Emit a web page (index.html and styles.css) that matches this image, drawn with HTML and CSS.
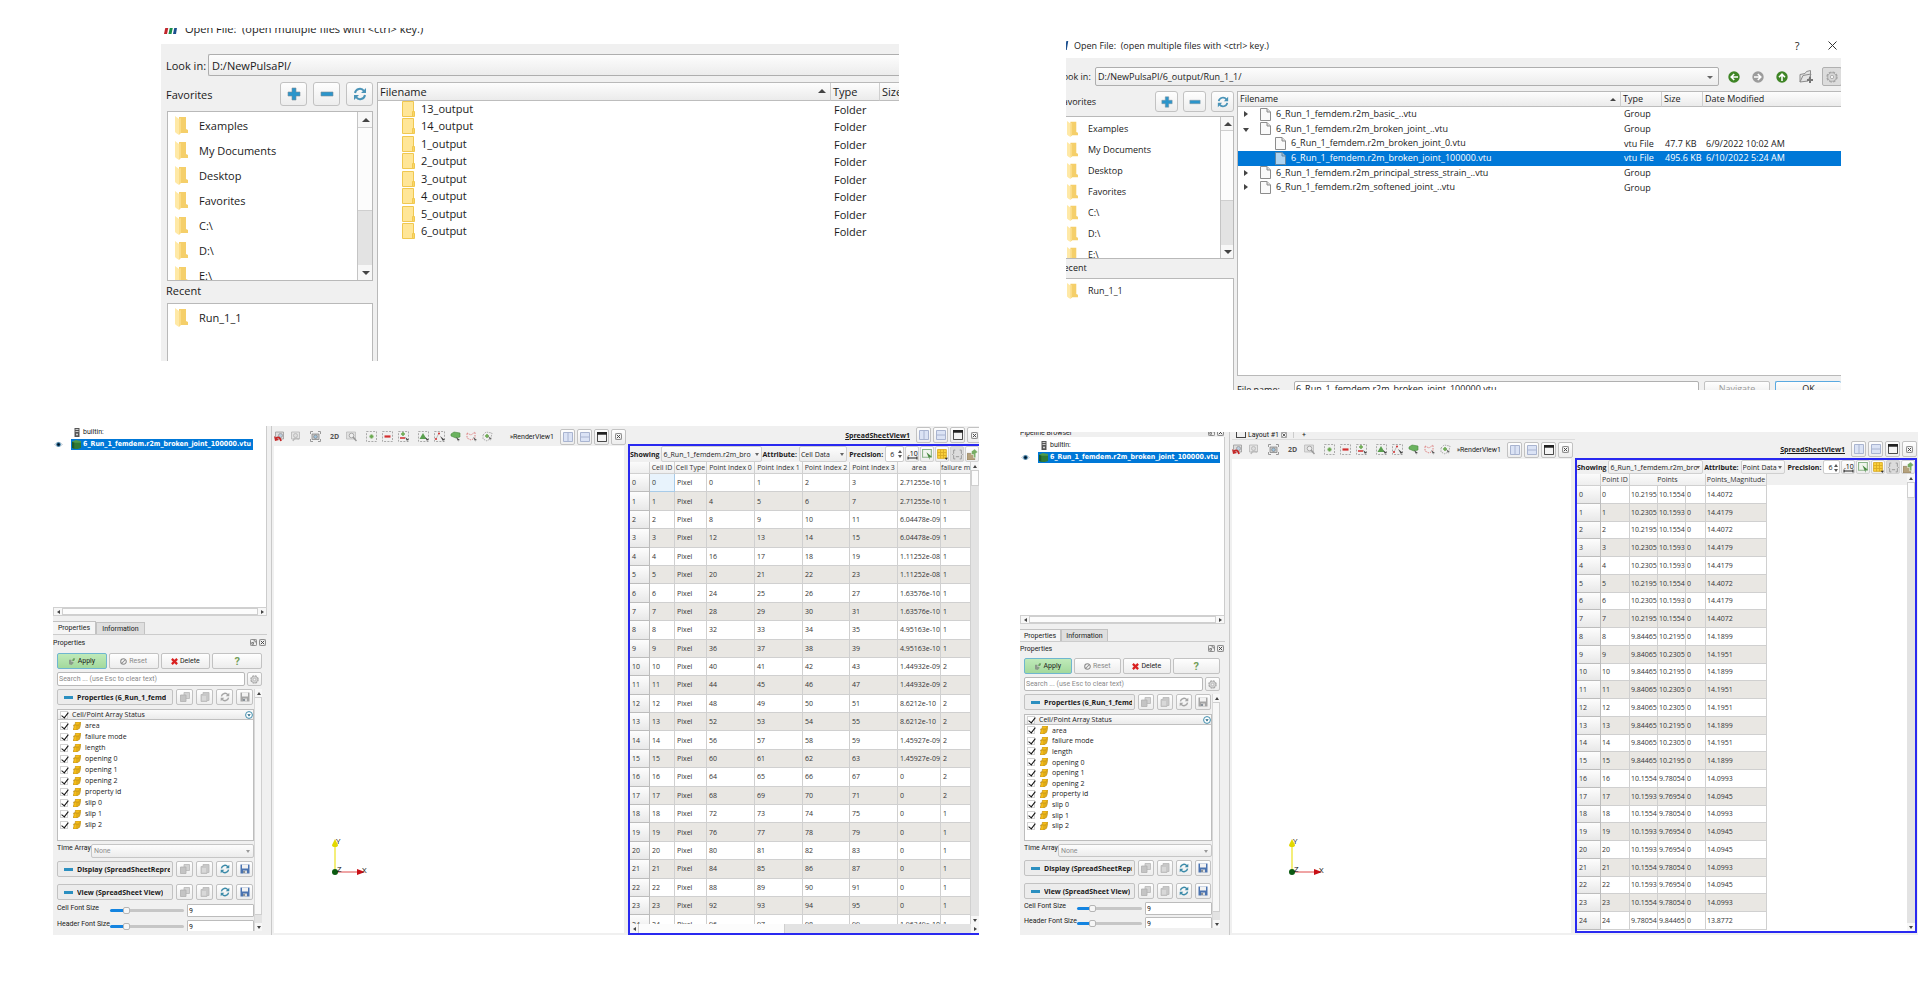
FILE: index.html
```
<!DOCTYPE html>
<html lang="en">
<head>
    <meta charset="UTF-8">
    <meta name="viewport" content="width=device-width, initial-scale=1.0">
    <title>Open File and SpreadSheet View</title>
    <link rel="stylesheet" href="styles.css">
</head>
<body>
    <!-- Icon set -->
    <svg class="sprite" xmlns="http://www.w3.org/2000/svg">
        <symbol id="i-logo" viewBox="0 0 14 12"><path fill="#c1272d" d="M2.500 0h3L3 12H0z"/><path fill="#1a8f4c" d="M7 0h3L7.500 12h-3z"/><path fill="#1b4f8f" d="M11.500 0h2.500L12 12H9z"/></symbol>
        <symbol id="i-folder" viewBox="0 0 13 19"><path fill="#f5cf6a" d="M4 1h7v12l2 1v3H4z"/><path fill="#ffe9a6" d="M0 0l4 3v16l-3-2-1-1z"/><path fill="#fbdc86" d="M4 3l2-1v15l-2 2z"/></symbol>
        <symbol id="i-dir" viewBox="0 0 13 16"><path fill="#ffe697" stroke="#f0c850" d="M.5.500h11v15H.5z"/><path fill="#fbd667" stroke="#f0c850" d="M10.500 10.500h2v5h-2z"/></symbol>
        <symbol id="i-file" viewBox="0 0 11 13"><path fill="#fafafa" stroke="#8c8c8c" d="M.5.500h6.500l3.500 3.500v8.500H.5z"/><path fill="#ddd" stroke="#8c8c8c" d="M7 .500v3.500h3.500"/></symbol>
        <symbol id="i-plus" viewBox="0 0 14 14"><path fill="#2b95cb" stroke="#7d8f99" stroke-width=".6" d="M5 1h4v4h4v4H9v4H5V9H1V5h4z"/></symbol>
        <symbol id="i-minus" viewBox="0 0 14 14"><path fill="#2b95cb" stroke="#7d8f99" stroke-width=".6" d="M1 5h12v4H1z"/></symbol>
        <symbol id="i-refresh" viewBox="0 0 14 14"><path fill="none" stroke="currentColor" stroke-width="2" d="M2 6a5 5 0 0 1 9-2M12 8a5 5 0 0 1-9 2"/><path fill="currentColor" d="M13 1v5H8zM1 13V8h5z"/></symbol>
        <symbol id="i-back" viewBox="0 0 12 12"><circle cx="6" cy="6" r="5.700" fill="currentColor"/><path fill="none" stroke="#fff" stroke-width="1.600" d="M10 6H3.500M6.200 3L3.200 6l3 3"/></symbol>
        <symbol id="i-fwd" viewBox="0 0 12 12"><circle cx="6" cy="6" r="5.700" fill="currentColor"/><path fill="none" stroke="#fff" stroke-width="1.600" d="M2 6h6.500M5.800 3l3 3-3 3"/></symbol>
        <symbol id="i-up" viewBox="0 0 12 12"><circle cx="6" cy="6" r="5.700" fill="currentColor"/><path fill="none" stroke="#fff" stroke-width="1.600" d="M6 10V3.500M3 6.200l3-3 3 3"/></symbol>
        <symbol id="i-newdir" viewBox="0 0 14 13"><path fill="#e4e4e4" stroke="#8c8c8c" d="M1 12V4.500l5-1 1.500-2 4-1v8M1 12l3-6.500 8-1.500-3 7z"/><path stroke="#777" stroke-width="2" d="M11 7v6M8 10h6"/></symbol>
        <symbol id="i-gear" viewBox="0 0 14 14"><circle cx="7" cy="7" r="5" fill="#d8d8d8" stroke="#a5a5a5" stroke-width="1"/><circle cx="7" cy="7" r="5.800" fill="none" stroke="#a5a5a5" stroke-width="1.600" stroke-dasharray="3 1.550"/><circle cx="7" cy="7" r="2" fill="#f4f4f4" stroke="#a5a5a5"/></symbol>
        <symbol id="i-server" viewBox="0 0 6 9"><path fill="#555" d="M.5 0h5v9h-5z"/><path fill="#ccc" d="M1.500 1h3v1h-3zM1.500 3h3v1h-3z"/><circle cx="3" cy="6.500" r="1" fill="#ddd"/></symbol>
        <symbol id="i-cube" viewBox="0 0 10 10"><path fill="#4f9a4a" d="M0 2l4-2 6 1v7l-4 2-6-1z"/><path fill="#1f5c27" d="M0 2l3 1v7l-3-1z"/><path fill="#2f7a36" d="M3 3h7v6l-4 1H3z"/></symbol>
        <symbol id="i-eye" viewBox="0 0 9 7"><path fill="#e8f0f4" stroke="#9ab" stroke-width=".5" d="M.5 3.500Q4.500-1 8.500 3.500 4.500 7.500.5 3.500z"/><circle cx="4.500" cy="3.500" r="2.200" fill="#246a96"/><circle cx="4.500" cy="3.500" r="1.200" fill="#012"/></symbol>
        <symbol id="i-float" viewBox="0 0 8 8"><rect x=".5" y=".5" width="7" height="7" rx="1" fill="none" stroke="#777"/><path fill="none" stroke="#555" stroke-width=".8" d="M2 4h2v2H2zM4 2h2v2"/></symbol>
        <symbol id="i-close" viewBox="0 0 8 8"><rect x=".5" y=".5" width="7" height="7" rx="1" fill="none" stroke="#777"/><path stroke="#444" stroke-width="1.100" d="M2 2l4 4M6 2L2 6"/></symbol>
        <symbol id="i-x" viewBox="0 0 9 9"><path stroke="#333" stroke-width="1" d="M.5.500l8 8M8.500.500l-8 8"/></symbol>
        <symbol id="i-apply" viewBox="0 0 8 8"><path fill="#8a9a8a" d="M0 2h5v4L3 8 0 7z"/><path fill="#66a85c" stroke="#fff" stroke-width=".5" d="M4 0h4L6 4H3z"/></symbol>
        <symbol id="i-reset" viewBox="0 0 8 8"><circle cx="4" cy="4" r="3.200" fill="none" stroke="#8c8c8c" stroke-width="1.200"/><path stroke="#8c8c8c" stroke-width="1.200" d="M6 2L2 6"/></symbol>
        <symbol id="i-del" viewBox="0 0 8 8"><path stroke="#d92020" stroke-width="2.600" d="M1 1l6 6M7 1L1 7"/></symbol>
        <symbol id="i-copy" viewBox="0 0 10 10"><path fill="#d2d2d2" stroke="#b8b8b8" stroke-width=".8" d="M4 .500h5.500v6H4z"/><path fill="#c4c4c4" stroke="#b0b0b0" stroke-width=".8" d="M.5 3h5.500v6.500H.5z"/></symbol>
        <symbol id="i-paste" viewBox="0 0 10 10"><path fill="#c8c8c8" stroke="#b8b8b8" stroke-width=".8" d="M3 .500h6v8H7v1H1V2.500h2z"/><path fill="#d8d8d8" d="M2 4h4v4.500H2z"/></symbol>
        <symbol id="i-save" viewBox="0 0 10 10"><path fill="currentColor" d="M.5.500h9v9h-9z"/><path fill="#f2f2f2" d="M2 .500h6v4H2z"/><path fill="#ddd" d="M3 6.500h4v3H3z"/><path fill="#345" d="M3.500 7h1v2h-1z"/></symbol>
        <symbol id="i-cells" viewBox="0 0 8 8"><path fill="#f6bd18" stroke="#b58a1c" stroke-width=".6" d="M2.500 0H8L7 5l-1 2H5L4 8H0l1-3-.5-2H2z"/><path stroke="#b58a1c" stroke-width=".6" d="M1 3h5L7 1M4 3v5M6 3v3" fill="none"/></symbol>
        <symbol id="i-down" viewBox="0 0 8 8"><circle cx="4" cy="4" r="3.400" fill="#fff" stroke="#3f8dad"/><path fill="#1c607f" d="M2.300 3.200h3.400L4 5.500z"/></symbol>
        <symbol id="i-undocam" viewBox="0 0 11 11"><path fill="#ddd" stroke="#999" stroke-width=".8" d="M1.500 1h8v7h-8z"/><circle cx="6.500" cy="4.500" r="2" fill="#bcd" stroke="#999" stroke-width=".8"/><path fill="none" stroke="#c62828" stroke-width="1.800" d="M2 7q4-2 5 3"/><path fill="#c62828" d="M0 5l1 5 4-1z"/></symbol>
        <symbol id="i-redocam" viewBox="0 0 11 11"><path fill="#e4e4e4" stroke="#b5b5b5" stroke-width=".8" d="M1.500 1h8v7h-8z"/><circle cx="5.500" cy="4.500" r="2" fill="#ddd" stroke="#b5b5b5" stroke-width=".8"/><path fill="none" stroke="#bbb" stroke-width="1.500" d="M3 10q1-4 6-2"/></symbol>
        <symbol id="i-cam" viewBox="0 0 11 11"><path fill="none" stroke="#999" d="M.5 3V.500H3M8 .500h2.500V3M10.500 8v2.500H8M3 10.500H.5V8"/><path fill="#ccc" stroke="#888" stroke-width=".8" d="M2 3h7v5.500H2z"/><circle cx="5.500" cy="5.700" r="1.800" fill="#9fc3dd" stroke="#777" stroke-width=".6"/></symbol>
        <symbol id="i-zoombox" viewBox="0 0 11 11"><path fill="#e0e0e0" stroke="#bbb" stroke-width=".8" d="M.5 1h9v7h-9z"/><circle cx="5.500" cy="4.500" r="2.300" fill="#eee" stroke="#aaa"/><path stroke="#999" stroke-width="1.500" d="M7 6l3.500 4"/></symbol>
        <symbol id="i-box" viewBox="0 0 11 11"><path fill="none" stroke="#aaa" stroke-dasharray="2 1.300" d="M.5.500h10v10H.5z"/></symbol>
        <symbol id="i-seladd" viewBox="0 0 11 11"><use href="#i-box"/><path stroke="#6aa84f" stroke-width="2" d="M5.500 3.500v4M3.500 5.500h4"/></symbol>
        <symbol id="i-selsub" viewBox="0 0 11 11"><use href="#i-box"/><path stroke="#d32f2f" stroke-width="2.200" d="M2.500 5.500h6"/></symbol>
        <symbol id="i-seltog" viewBox="0 0 11 11"><use href="#i-box"/><path stroke="#6aa84f" stroke-width="1.500" d="M5 1v4M3 3h4"/><path stroke="#d32f2f" stroke-width="1.500" d="M2 7h5"/><path fill="#444" d="M7 6l4 3-2 .5.500 1.500z"/></symbol>
        <symbol id="i-selcell" viewBox="0 0 11 11"><use href="#i-box"/><path fill="#5aa04f" d="M5 2l3.500 6H1.500z"/><path fill="#444" d="M7 6l4 3-2 .5.500 1.500z"/></symbol>
        <symbol id="i-selpt" viewBox="0 0 11 11"><use href="#i-box"/><path fill="none" stroke="#999" stroke-width=".6" d="M5 2L2 8"/><circle cx="5" cy="2.500" r="1" fill="#d32f2f"/><circle cx="2" cy="8" r="1" fill="#d32f2f"/><path fill="#444" d="M6 5l5 4-2 .5.500 1.500z"/></symbol>
        <symbol id="i-selfr" viewBox="0 0 11 11"><path fill="#6bb35f" stroke="#4a8a42" stroke-width=".6" d="M1 3l3-2 6 1v4L6 7 1 5z"/><path fill="#444" d="M6 6l4 3-2 .5.500 1.500z"/></symbol>
        <symbol id="i-selpoly" viewBox="0 0 11 11"><path fill="none" stroke="#dd8080" stroke-dasharray="1.500 1" d="M1 2l4 2 4-3v6L5 9 1 7z"/><path fill="#555" d="M7 6l4 3-2 .5.500 1.500z"/></symbol>
        <symbol id="i-selint" viewBox="0 0 11 11"><path fill="none" stroke="#aaa" stroke-dasharray="1.500 1" d="M1 4l3-3 6 1-1 5-4 3-4-2z"/><path stroke="#6aa84f" stroke-width="1.500" d="M5 3v4M3 5h4"/><path fill="#666" d="M6 5l4 3-2 .5.500 1.500z"/></symbol>
        <symbol id="i-splith" viewBox="0 0 10 10"><path fill="#dbe3f5" stroke="#a9b4d0" d="M.5.500h9v9h-9zM5 .500v9"/></symbol>
        <symbol id="i-splitv" viewBox="0 0 10 10"><path fill="#dbe3f5" stroke="#a9b4d0" d="M.5.500h9v9h-9zM.5 5h9"/></symbol>
        <symbol id="i-max" viewBox="0 0 11 11"><path fill="#f4f4f4" stroke="#333" d="M.5.500h10v10H.5z"/><path fill="#222" d="M0 0h11v3H0z"/></symbol>
        <symbol id="i-prec" viewBox="0 0 11 10"><text x="1" y="6" font-size="7" font-family="Open Sans, sans-serif">.10</text><path fill="none" stroke="#222" d="M1 8.500h9M1 7v3M10 7v3"/></symbol>
        <symbol id="i-selonly" viewBox="0 0 10 10"><path fill="#f0f5ee" stroke="#8db58a" d="M.5.500h8v7h-8z"/><path fill="#4a8a42" d="M4 3l5 4-2.200.300L7 10z"/></symbol>
        <symbol id="i-grid" viewBox="0 0 10 10"><path fill="#fbd23c" stroke="#d9ab25" stroke-width=".8" d="M.5.500h8v8h-8zM3.200.500v8M5.900.500v8M.5 3.200h8M.5 5.900h8"/><path fill="#333" d="M7 8h3L8.500 10z"/></symbol>
        <symbol id="i-braces" viewBox="0 0 10 10"><path fill="none" stroke="#9a9a9a" stroke-width=".9" d="M3 1H1.500v3L.5 5l1 1v3H3M7 1h1.500v3l1 1-1 1v3H7M3.500 7h3"/></symbol>
        <symbol id="i-export" viewBox="0 0 10 10"><path fill="#b5a17c" stroke="#8b7a5a" stroke-width=".6" d="M0 4h7v6H0z"/><path fill="#78ad63" stroke="#fff" stroke-width=".5" d="M4 5V2l3-2 3 3-2 1v4H6V5z"/></symbol>
        <symbol id="i-axes" viewBox="0 0 40 42"><path stroke="#f4ee7a" stroke-width="2" d="M5 35V9"/><path fill="#e2d800" d="M5 2l3 6a3 2 0 0 1-6 0z"/><path stroke="#e04b4b" d="M5 35h22"/><path fill="#c80f16" d="M35 35l-8-3v6z"/><circle cx="5" cy="35" r="3" fill="#0b5a12"/><g fill="#111" font-family="Open Sans, sans-serif" font-size="8"><text x="6" y="7">Y</text><text x="7" y="35">Z</text><text x="32" y="36">X</text></g></symbol>
    </svg>

    <div class="gallery">
        <section class="cell cell-a">
            <div class="dialog dialog-a">
                <div class="dialog-title">
                    <svg class="logo"><use href="#i-logo"/></svg>
                    <span>Open File:&nbsp; (open multiple files with &lt;ctrl&gt; key.)</span>
                </div>
                <div class="dialog-body">
                    <div class="look-row">
                        <label for="lookA">Look in:</label>
                        <div class="combo look-combo"><select id="lookA"><option>D:/NewPulsaPI/</option></select></div>
                    </div>
                    <div class="panes">
                        <div class="places" data-tpl="places"></div>
                        <div class="files">
                            <table class="file-table">
                                <thead><tr><th class="c-name">Filename<i class="sort"></i></th><th class="c-type">Type</th><th class="c-size">Size</th></tr></thead>
                                <tbody>
                                    <tr><td><svg><use href="#i-dir"/></svg>13_output</td><td>Folder</td><td></td></tr>
                                    <tr><td><svg><use href="#i-dir"/></svg>14_output</td><td>Folder</td><td></td></tr>
                                    <tr><td><svg><use href="#i-dir"/></svg>1_output</td><td>Folder</td><td></td></tr>
                                    <tr><td><svg><use href="#i-dir"/></svg>2_output</td><td>Folder</td><td></td></tr>
                                    <tr><td><svg><use href="#i-dir"/></svg>3_output</td><td>Folder</td><td></td></tr>
                                    <tr><td><svg><use href="#i-dir"/></svg>4_output</td><td>Folder</td><td></td></tr>
                                    <tr><td><svg><use href="#i-dir"/></svg>5_output</td><td>Folder</td><td></td></tr>
                                    <tr><td><svg><use href="#i-dir"/></svg>6_output</td><td>Folder</td><td></td></tr>
                                </tbody>
                            </table>
                        </div>
                    </div>
                </div>
            </div>
        </section>

        <section class="cell cell-b">
            <div class="dialog dialog-b">
                <div class="dialog-title">
                    <svg class="logo"><use href="#i-logo"/></svg>
                    <span>Open File:&nbsp; (open multiple files with &lt;ctrl&gt; key.)</span>
                    <button class="win-btn help">?</button>
                    <button class="win-btn" aria-label="Close"><svg><use href="#i-x"/></svg></button>
                </div>
                <div class="dialog-body">
                    <div class="look-row">
                        <label for="lookB">Look in:</label>
                        <div class="combo look-combo"><select id="lookB"><option>D:/NewPulsaPI/6_output/Run_1_1/</option></select></div>
                        <div class="nav">
                            <button class="flat green" aria-label="Back"><svg><use href="#i-back"/></svg></button>
                            <button class="flat grey" aria-label="Forward"><svg><use href="#i-fwd"/></svg></button>
                            <button class="flat green" aria-label="Up"><svg><use href="#i-up"/></svg></button>
                            <button class="flat new" aria-label="New folder"><svg><use href="#i-newdir"/></svg></button>
                            <button class="gear-btn" aria-label="Details"><svg><use href="#i-gear"/></svg></button>
                        </div>
                    </div>
                    <div class="panes">
                        <div class="places" data-tpl="places"></div>
                        <div class="right-pane">
                            <div class="files">
                                <table class="file-table">
                                    <thead><tr><th class="c-name">Filename<i class="sort"></i></th><th class="c-type">Type</th><th class="c-size">Size</th><th class="c-date">Date Modified</th></tr></thead>
                                    <tbody>
                                        <tr><td><i class="twist"></i><svg><use href="#i-file"/></svg>6_Run_1_femdem.r2m_basic_..vtu</td><td>Group</td><td></td><td></td></tr>
                                        <tr><td><i class="twist open"></i><svg><use href="#i-file"/></svg>6_Run_1_femdem.r2m_broken_joint_..vtu</td><td>Group</td><td></td><td></td></tr>
                                        <tr class="child"><td><svg><use href="#i-file"/></svg>6_Run_1_femdem.r2m_broken_joint_0.vtu</td><td>vtu File</td><td>47.7 KB</td><td>6/9/2022 10:02 AM</td></tr>
                                        <tr class="child selected"><td><svg><use href="#i-file"/></svg>6_Run_1_femdem.r2m_broken_joint_100000.vtu</td><td>vtu File</td><td>495.6 KB</td><td>6/10/2022 5:24 AM</td></tr>
                                        <tr><td><i class="twist"></i><svg><use href="#i-file"/></svg>6_Run_1_femdem.r2m_principal_stress_strain_..vtu</td><td>Group</td><td></td><td></td></tr>
                                        <tr><td><i class="twist"></i><svg><use href="#i-file"/></svg>6_Run_1_femdem.r2m_softened_joint_..vtu</td><td>Group</td><td></td><td></td></tr>
                                    </tbody>
                                </table>
                            </div>
                            <div class="name-row">
                                <label for="fileName">File name:</label>
                                <input type="text" id="fileName" value="6_Run_1_femdem.r2m_broken_joint_100000.vtu">
                                <button disabled>Navigate</button>
                                <button class="ok">OK</button>
                            </div>
                        </div>
                    </div>
                </div>
            </div>
        </section>

        <section class="cell cell-c">
            <div class="app app-c">
                <div class="side" data-tpl="side"></div>
                <div class="render">
                    <div class="layout-tabs"></div>
                    <div data-tpl="render"></div>
                </div>
                <div class="sheet">
                    <div data-tpl="sheethead"></div>
                    <div class="sheet-frame">
                        <div class="sheet-bar" data-tpl="sheetbar" data-attribute="Cell Data"></div>
                        <div class="grid-wrap">
                            <div class="grid-clip"><table class="grid" id="cellTable"></table></div>
                            <div class="vbar"><i class="up"></i><b></b><i class="down"></i></div>
                        </div>
                        <div class="hbar"><i class="left"></i><b></b><i class="right"></i></div>
                    </div>
                </div>
            </div>
        </section>

        <section class="cell cell-d">
            <div class="app app-d">
                <div class="side" data-tpl="side"></div>
                <div class="render">
                    <div class="layout-tabs"><span class="tab-on"><i></i>Layout #1<svg><use href="#i-close"/></svg></span><span class="tab-add">+</span></div>
                    <div data-tpl="render"></div>
                </div>
                <div class="sheet">
                    <div data-tpl="sheethead"></div>
                    <div class="sheet-frame">
                        <div class="sheet-bar" data-tpl="sheetbar" data-attribute="Point Data"></div>
                        <div class="grid-wrap">
                            <div class="grid-clip"><table class="grid" id="pointTable"></table></div>
                            <div class="vbar"><i class="up"></i><b></b><i class="down"></i></div>
                        </div>
                    </div>
                </div>
            </div>
        </section>
    </div>

    <template id="places">
        <div class="places-head">
            <span>Favorites</span>
            <button aria-label="Add"><svg><use href="#i-plus"/></svg></button>
            <button aria-label="Remove"><svg><use href="#i-minus"/></svg></button>
            <button class="blue" aria-label="Reset"><svg><use href="#i-refresh"/></svg></button>
        </div>
        <div class="fav-box">
            <ul>
                <li><svg><use href="#i-folder"/></svg>Examples</li>
                <li><svg><use href="#i-folder"/></svg>My Documents</li>
                <li><svg><use href="#i-folder"/></svg>Desktop</li>
                <li><svg><use href="#i-folder"/></svg>Favorites</li>
                <li><svg><use href="#i-folder"/></svg>C:\</li>
                <li><svg><use href="#i-folder"/></svg>D:\</li>
                <li><svg><use href="#i-folder"/></svg>E:\</li>
            </ul>
            <div class="vbar"><i class="up"></i><b></b><i class="down"></i></div>
        </div>
        <div class="recent-head">Recent</div>
        <ul class="recent-box">
            <li><svg><use href="#i-folder"/></svg>Run_1_1</li>
        </ul>
    </template>

    <template id="side">
        <div class="dock-title pipe-title"><span>Pipeline Browser</span><svg><use href="#i-float"/></svg><svg><use href="#i-close"/></svg></div>
        <div class="tree">
            <div class="tree-row server"><svg><use href="#i-server"/></svg>builtin:</div>
            <div class="tree-row"><svg class="eye"><use href="#i-eye"/></svg><span class="picked"><svg><use href="#i-cube"/></svg>6_Run_1_femdem.r2m_broken_joint_100000.vtu</span></div>
        </div>
        <div class="hbar"><i class="left"></i><b></b><i class="right"></i></div>
        <div class="tabs"><button class="on">Properties</button><button>Information</button></div>
        <div class="dock-title"><span>Properties</span><svg><use href="#i-float"/></svg><svg><use href="#i-close"/></svg></div>
        <div class="actions">
            <button class="apply"><svg><use href="#i-apply"/></svg>Apply</button>
            <button disabled><svg><use href="#i-reset"/></svg>Reset</button>
            <button><svg><use href="#i-del"/></svg>Delete</button>
            <button class="q">?</button>
        </div>
        <div class="search">
            <input type="text" placeholder="Search ... (use Esc to clear text)" aria-label="Search">
            <button aria-label="Advanced"><svg><use href="#i-gear"/></svg></button>
        </div>
        <div class="props">
            <div class="props-body">
                <div class="group off"><button class="group-name"><i></i><span>Properties (6_Run_1_femd</span></button><button class="ib"><svg><use href="#i-copy"/></svg></button><button class="ib"><svg><use href="#i-paste"/></svg></button><button class="ib re"><svg><use href="#i-refresh"/></svg></button><button class="ib sv"><svg><use href="#i-save"/></svg></button></div>
                <div class="arrays">
                    <label class="arrays-head"><input type="checkbox" checked>Cell/Point Array Status<svg><use href="#i-down"/></svg></label>
                    <div class="arrays-list"></div>
                </div>
                <label class="time"><span>Time Array</span><div class="combo"><select disabled><option>None</option></select></div></label>
                <div class="group"><button class="group-name"><i></i><span>Display (SpreadSheetRepre</span></button><button class="ib"><svg><use href="#i-copy"/></svg></button><button class="ib"><svg><use href="#i-paste"/></svg></button><button class="ib re"><svg><use href="#i-refresh"/></svg></button><button class="ib sv"><svg><use href="#i-save"/></svg></button></div>
                <div class="group view"><button class="group-name"><i></i><span>View (SpreadSheet View)</span></button><button class="ib"><svg><use href="#i-copy"/></svg></button><button class="ib"><svg><use href="#i-paste"/></svg></button><button class="ib re"><svg><use href="#i-refresh"/></svg></button><button class="ib sv"><svg><use href="#i-save"/></svg></button></div>
                <label class="size-row"><span>Cell Font Size</span><input type="range" min="0" max="40" value="8"><input type="text" value="9"></label>
                <label class="size-row"><span>Header Font Size</span><input type="range" min="0" max="40" value="8"><input type="text" value="9"></label>
            </div>
            <div class="vbar"><i class="up"></i><b></b><i class="down"></i></div>
        </div>
    </template>

    <template id="render">
        <div class="view-bar">
            <div class="tools">
                <svg><use href="#i-undocam"/></svg><svg><use href="#i-redocam"/></svg><svg class="wide"><use href="#i-cam"/></svg><span class="wide">2D</span><svg><use href="#i-zoombox"/></svg><svg class="wide"><use href="#i-seladd"/></svg><svg><use href="#i-selsub"/></svg><svg><use href="#i-seltog"/></svg><svg class="wide"><use href="#i-selcell"/></svg><svg><use href="#i-selpt"/></svg><svg><use href="#i-selfr"/></svg><svg><use href="#i-selpoly"/></svg><svg><use href="#i-selint"/></svg>
            </div>
            <span class="view-name">»RenderView1</span>
            <button aria-label="Split horizontal"><svg><use href="#i-splith"/></svg></button><button aria-label="Split vertical"><svg><use href="#i-splitv"/></svg></button><button aria-label="Maximize"><svg><use href="#i-max"/></svg></button><button aria-label="Close"><svg class="small"><use href="#i-close"/></svg></button>
        </div>
        <div class="canvas"><svg class="axes"><use href="#i-axes"/></svg></div>
    </template>

    <template id="sheethead">
        <div class="view-bar">
            <span class="view-name active">SpreadSheetView1</span>
            <button aria-label="Split horizontal"><svg><use href="#i-splith"/></svg></button><button aria-label="Split vertical"><svg><use href="#i-splitv"/></svg></button><button aria-label="Maximize"><svg><use href="#i-max"/></svg></button><button aria-label="Close"><svg class="small"><use href="#i-close"/></svg></button>
        </div>
    </template>

    <template id="sheetbar">
        <label class="w-show"><b>Showing</b><div class="combo"><select><option>6_Run_1_femdem.r2m_bro</option></select></div></label>
        <label class="w-attr"><b>Attribute:</b><div class="combo"><select class="attribute"></select></div></label>
        <label class="w-prec"><b>Precision:</b><div class="spin"><input type="text" value="6"><i class="up"></i><i class="down"></i></div></label>
        <button aria-label="Fixed"><svg><use href="#i-prec"/></svg></button>
        <button aria-label="Selected only"><svg><use href="#i-selonly"/></svg></button>
        <button aria-label="Columns"><svg><use href="#i-grid"/></svg></button>
        <button class="down" aria-label="Connectivity"><svg><use href="#i-braces"/></svg></button>
        <button aria-label="Export"><svg><use href="#i-export"/></svg></button>
    </template>

    <script src="script.js"></script>
</body>
</html>
```
FILE: styles.css
```
* {
    margin: 0;
    padding: 0;
    box-sizing: border-box;
}

body {
    font-family: 'Open Sans', 'Noto Sans', sans-serif;
    font-size: 7px;
    background: #fff;
    color: #1a1a1a;
    min-height: 100vh;
}

.sprite {
    display: none;
}

button, input, select {
    font: inherit;
    color: inherit;
    border-radius: 2px;
}

button {
    display: flex;
    align-items: center;
    justify-content: center;
    background: linear-gradient(#fefefe, #ededed);
    border: 1px solid #c2c2c2;
    white-space: nowrap;
}

svg {
    flex: none;
    display: block;
}

ul {
    list-style: none;
}

table {
    border-collapse: separate;
    border-spacing: 0;
    table-layout: fixed;
}

th {
    font-weight: normal;
}

.gallery {
    display: grid;
    grid-template-columns: 1000fr 920fr;
    grid-template-rows: 390px auto;
}

.cell {
    min-width: 0;
}

.cell-a { padding: 28px 101px 0 161px; }
.cell-b { padding: 36px 79px 0 66px; }
.cell-c { padding: 36px 21px 0 53px; }
.cell-d { padding: 42px 2px 0 20px; }

/* Shared widgets */
.combo {
    position: relative;
    min-width: 0;
}

.combo select {
    appearance: none;
    display: block;
    width: 100%;
    height: 100%;
    padding: 0 12px 0 2px;
    border: 1px solid #c6c6c6;
    background: linear-gradient(#fdfdfd, #ececec);
    overflow: hidden;
    opacity: 1;
}

.combo::after {
    content: "";
    position: absolute;
    right: 4px;
    top: 45%;
    border: 2px solid transparent;
    border-top: 3px solid #666;
    border-bottom: 0;
}

.vbar {
    display: flex;
    flex-direction: column;
    flex: none;
    width: 8px;
    background: #e3e3e3;
}

.hbar {
    display: flex;
    height: 9px;
    background: #e3e3e3;
    border: 1px solid #d0d0d0;
}

.vbar i, .hbar i {
    flex: none;
    display: flex;
    align-items: center;
    justify-content: center;
    background: #f7f7f7;
    width: 8px;
    height: 8px;
}

.hbar i {
    height: 7px;
}

.vbar b, .hbar b {
    background: #fcfcfc;
    border: 1px solid #cfcfcf;
}

.vbar .down, .hbar .right {
    margin-top: auto;
}

.hbar .right {
    margin: 0 0 0 auto;
}

.vbar i::before, .hbar i::before {
    content: "";
    border: 2px solid transparent;
}

.vbar .up::before { border-bottom: 3px solid #444; border-top: 0; }
.vbar .down::before { border-top: 3px solid #444; border-bottom: 0; }
.hbar .left::before { border-right: 3px solid #444; border-left: 0; }
.hbar .right::before { border-left: 3px solid #444; border-right: 0; }

/* Open File dialogs */
.dialog {
    display: flex;
    flex-direction: column;
    overflow: hidden;
}

.dialog-a {
    --item: 25px;
    --head: 24px;
    --btn: 27px;
    --bar: 15px;
    font-size: 11px;
    height: 333px;
}

.dialog-b {
    --item: 21px;
    --head: 21px;
    --btn: 23px;
    --bar: 13px;
    font-size: 9px;
    height: 354px;
}

.dialog-title {
    display: flex;
    align-items: center;
    flex: none;
    height: 22px;
    gap: 7px;
    white-space: pre;
}

.dialog-a .dialog-title {
    height: 16px;
    padding: 0 0 16px 3px;
}

.dialog-title .logo {
    width: 14px;
    height: 12px;
}

.dialog-b .logo {
    width: 12px;
    height: 9px;
    margin-left: -9px;
}

.dialog-b .dialog-title {
    gap: 5px;
    padding-bottom: 3px;
}

.win-btn {
    border: 0;
    background: none;
    width: 18px;
}

.win-btn.help {
    margin: 0 12px 0 auto;
    font-size: 11px;
}

.win-btn svg {
    width: 9px;
    height: 9px;
}

.dialog-body {
    flex: 1;
    display: flex;
    flex-direction: column;
    background: #f0f0f0;
    padding: 10px 0 0 6px;
    min-height: 0;
}

.dialog-b .dialog-body {
    padding-top: 9px;
    margin-left: -13px;
}

.look-row {
    display: flex;
    align-items: center;
    flex: none;
    height: 22px;
    margin-bottom: 6px;
}

.look-row label {
    width: 42px;
    margin-left: -1px;
}

.dialog-b .look-row {
    height: 19px;
    margin-bottom: 5px;
}

.dialog-b .look-row label {
    width: 37px;
}

.look-combo {
    flex: 1;
    height: 100%;
}

.look-combo select {
    border-color: #aeaeae;
    padding-left: 3px;
}

.dialog-b .look-combo select {
    padding-left: 2px;
}

.dialog-a .look-combo select {
    border-right: 0;
    border-radius: 2px 0 0 2px;
}

.dialog-a .look-combo::after {
    display: none;
}

.look-combo::after {
    right: 6px;
    border-width: 3px 3px 0;
}

.nav {
    display: flex;
    align-items: center;
    height: 100%;
}

.flat {
    border: 0;
    background: none;
    width: 24px;
}

.nav .flat:first-child { margin-left: 3px; }
.flat svg { width: 12px; height: 12px; }
.green { color: #3f8526; }
.grey { color: #9c9c9c; }

.flat.new svg {
    width: 14px;
    height: 13px;
}

.gear-btn {
    width: 20px;
    height: 100%;
    margin-left: 4px;
    margin-right: -1px;
    background: #dcdcdc;
    border-color: #b0b0b0;
}

.gear-btn svg {
    width: 12px;
    height: 12px;
}

.panes {
    flex: 1;
    display: flex;
    min-height: 0;
}

.places {
    flex: none;
    display: flex;
    flex-direction: column;
    width: 206px;
    margin-right: 4px;
}

.dialog-b .places {
    width: 175px;
    margin-right: 3px;
}

.places-head {
    display: flex;
    gap: 6px;
    height: var(--head);
    margin-bottom: 5px;
    align-items: center;
    flex: none;
}

.dialog-b .places-head {
    gap: 5px;
    margin-bottom: 4px;
}

.places-head span {
    margin: 0 auto 0 -1px;
}

.places-head button {
    width: var(--btn);
    height: 100%;
    border-radius: 3px;
}

.places-head svg {
    width: 14px;
    height: 14px;
}

.dialog-b .places-head svg {
    width: 12px;
    height: 12px;
}

.blue {
    color: #4a94b8;
}

.fav-box {
    display: flex;
    flex: none;
    height: 170px;
    background: #fff;
    border: 1px solid #b9b9b9;
    overflow: hidden;
}

.dialog-b .fav-box {
    height: 143px;
}

.fav-box ul {
    flex: 1;
    padding-top: 1px;
}

.fav-box .vbar, .fav-box .vbar i {
    width: var(--bar);
}

.fav-box .vbar {
    border-left: 1px solid #c4c4c4;
}

.fav-box .vbar i {
    height: var(--bar);
}

.fav-box .vbar i::before {
    border-width: 4px;
}

.fav-box .vbar .up::before { border-top: 0; }
.fav-box .vbar .down::before { border-bottom: 0; }

.fav-box .vbar b {
    height: 50%;
    border-width: 1px 0;
}

.places li {
    display: flex;
    align-items: center;
    height: var(--item);
    padding-left: 7px;
}

.places li svg {
    width: 13px;
    height: 19px;
    margin-right: 11px;
}

.dialog-b .places li svg {
    width: 11px;
    height: 16px;
    margin-right: 10px;
}

.recent-head {
    height: 22px;
    line-height: 20px;
    margin-left: -1px;
    flex: none;
}

.dialog-b .recent-head {
    height: 19px;
    line-height: 18px;
}

.recent-box {
    flex: 1;
    background: #fff;
    border: 1px solid #b9b9b9;
    border-bottom: 0;
    padding-top: 1px;
}

.right-pane {
    flex: 1;
    min-width: 0;
    display: flex;
    flex-direction: column;
}

.files {
    flex: 1;
    min-width: 0;
    background: #fff;
    border: 1px solid #b9b9b9;
    border-right: 0;
    overflow: hidden;
}

.dialog-a .files {
    border-bottom: 0;
}

.dialog-b .files {
    flex: none;
    height: 285px;
}

.file-table {
    width: 100%;
    height: 158px;
    white-space: nowrap;
}

.dialog-b .file-table {
    height: 103px;
}

.file-table th {
    height: 18px;
    text-align: left;
    padding-left: 2px;
    line-height: 12px;
    background: linear-gradient(#fdfdfd, #ebebeb);
    border-bottom: 1px solid #bdbdbd;
    border-right: 1px solid #cfcfcf;
    position: relative;
}

.dialog-b .file-table th {
    height: 15px;
    line-height: 10px;
}

.file-table th:last-child {
    border-right: 0;
}

.dialog-a .c-type { width: 49px; }
.dialog-a .c-size { width: 19px; }
.dialog-b .c-type { width: 41px; }
.dialog-b .c-size { width: 41px; }
.dialog-b .c-date { width: 138px; }

.sort {
    position: absolute;
    right: 4px;
    top: 6px;
    border: 4px solid transparent;
    border-top: 0;
    border-bottom-color: #444;
}

.dialog-b .sort {
    border-width: 0 3px 3px;
}

.file-table td {
    padding-left: 3px;
    line-height: 12px;
    vertical-align: middle;
}

.file-table td svg {
    display: inline-block;
    vertical-align: middle;
    width: 13px;
    height: 16px;
    margin: -2px 6px 0 21px;
}

.dialog-b .file-table td svg {
    width: 11px;
    height: 13px;
    margin: -1px 5px 0 12px;
}

.dialog-b .file-table .child svg {
    margin-left: 34px;
}

.twist {
    display: inline-block;
    width: 4px;
    margin-left: 3px;
    border: 3px solid transparent;
    border-left: 4px solid #444;
    border-right: 0;
}

.twist.open {
    width: 6px;
    margin-left: 2px;
    margin-right: -1px;
    border: 3px solid transparent;
    border-top: 4px solid #444;
    border-bottom: 0;
}

.selected td {
    background: #0078d7;
    color: #fff;
}

.selected svg {
    opacity: .7;
}

.name-row {
    display: flex;
    height: 20px;
    margin-top: 5px;
}

.name-row label {
    width: 57px;
    padding-top: 2px;
}

.name-row input {
    flex: 1;
    border: 1px solid #b0b0b0;
    padding-left: 1px;
}

.name-row button {
    width: 66px;
    margin-left: 5px;
}

.name-row button:disabled {
    color: #999;
}

.name-row .ok {
    border-color: #5aa9e0;
    border-right: 0;
}

/* Spreadsheet windows */
.app {
    display: grid;
    grid-template-rows: 100%;
    overflow: hidden;
    background: #f0f0f0;
}

.app-c {
    --tree: 181px;
    --arrays: 132px;
    --props: 242px;
    --row-gap: 3px;
    --title: 15px;
    grid-template-columns: 221px 1fr 351px;
    height: 509px;
}

.app-d {
    --tree: 178px;
    --arrays: 127px;
    --props: 234px;
    --row-gap: 2px;
    --title: 13px;
    grid-template-columns: 212px 1fr 343px;
    height: 503px;
}

.side {
    font-family: Roboto, 'Open Sans', sans-serif;
    border-right: 1px solid #c9c9c9;
    margin-right: 2px;
    padding-right: 4px;
    min-width: 0;
    overflow: hidden;
}

.dock-title {
    display: flex;
    align-items: center;
    height: var(--title);
    gap: 2px;
    padding-right: 1px;
}

.dock-title span {
    margin-right: auto;
}

.dock-title svg {
    width: 7px;
    height: 7px;
}

.pipe-title {
    height: 5px;
    overflow: hidden;
    padding-bottom: 4px;
}

.app-c .pipe-title {
    display: none;
}

.tree {
    height: var(--tree);
    background: #fff;
    border-right: 1px solid #ccc;
    overflow: hidden;
}

.app-d .tree {
    padding-top: 2px;
}

.tree-row {
    display: flex;
    align-items: center;
    height: 12px;
}

.server {
    padding-left: 21px;
}

.server svg {
    width: 6px;
    height: 9px;
    margin-right: 3px;
}

.eye {
    width: 9px;
    height: 7px;
    margin: 0 8px 0 1px;
}

.picked {
    display: flex;
    align-items: center;
    gap: 2px;
    height: 11px;
    padding: 0 2px 0 1px;
    background: #0078d7;
    color: #fff;
    font-family: 'DejaVu Sans Condensed', 'Open Sans', sans-serif;
    font-weight: bold;
    white-space: nowrap;
}

.picked svg {
    width: 9px;
    height: 9px;
}

.side > .hbar b {
    flex: 1;
}

.tabs {
    display: flex;
    align-items: flex-end;
    height: 14px;
    margin-top: 5px;
    border-bottom: 1px solid #ccc;
}

.app-d .tabs {
    height: 13px;
}

.tabs button {
    width: 49px;
    height: 12px;
    background: #dfdfdf;
    border-bottom: 0;
    border-radius: 0;
}

.tabs .on {
    width: 43px;
    height: 100%;
    background: #f5f5f5;
    border-left: 0;
}

.app-d .tabs button {
    width: 47px;
}

.app-d .tabs .on {
    width: 41px;
}

.actions {
    display: grid;
    grid-template-columns: repeat(4, 1fr);
    gap: 2px;
    padding: 3px 5px 3px 4px;
}

.actions button {
    height: 16px;
    gap: 2px;
}

.actions svg {
    width: 7px;
    height: 7px;
}

.actions .apply {
    background: linear-gradient(#bfeab9, #a3d99c);
    border-color: #6fb6cf;
}

.actions button:disabled {
    color: #8a8a8a;
}

.actions .q {
    color: #74a05a;
    font-size: 11px;
    font-weight: bold;
}

.search {
    display: flex;
    gap: 2px;
    height: 14px;
    padding: 0 5px 0 4px;
}

.search input {
    flex: 1;
    min-width: 0;
    border: 1px solid #b8b8b8;
    padding-left: 1px;
}

.search input::placeholder {
    color: #8a8a8a;
}

.search button {
    width: 15px;
}

.search svg {
    width: 9px;
    height: 9px;
}

.props {
    display: flex;
    height: var(--props);
    margin: 3px 5px 0 4px;
    overflow: hidden;
}

.props-body {
    flex: 1;
    min-width: 0;
}

.props > .vbar {
    border-left: 1px solid #d8d8d8;
}

.props > .vbar b {
    flex: 1;
    background: #f7f7f7;
    border-left: 0;
    margin-bottom: 8px;
}

.group {
    display: flex;
    gap: 3px;
    height: 16px;
    margin-right: 1px;
}

.group-name {
    flex: 1;
    min-width: 0;
    justify-content: flex-start;
    background: #ececec;
    font-family: 'Open Sans', sans-serif;
    font-weight: bold;
    padding: 0 2px 0 6px;
}

.group-name i {
    flex: none;
    width: 9px;
    height: 3px;
    margin-right: 4px;
    background: #2b8fc0;
}

.group-name span {
    overflow: hidden;
}

.ib {
    flex: none;
    width: 17px;
}

.app-d .ib {
    width: 16px;
}

.ib svg {
    width: 10px;
    height: 10px;
}

.re { color: #3b8aa8; }
.sv { color: #4a73b0; }
.off .re, .off .sv { color: #a5a5a5; }

.arrays {
    height: var(--arrays);
    margin: 4px 0 3px;
    background: #fff;
    border: 1px solid #bdbdbd;
    font-family: 'Open Sans', sans-serif;
}

.arrays label {
    display: flex;
    align-items: center;
    padding-left: 2px;
}

.arrays-head {
    height: 10px;
    background: linear-gradient(#fbfbfb, #ebebeb);
    border-bottom: 1px solid #c0c0c0;
    gap: 4px;
}

.arrays-head svg {
    width: 8px;
    height: 8px;
    margin-left: auto;
}

.arrays-list {
    display: grid;
    grid-auto-rows: 1fr;
    height: 110px;
}

.app-d .arrays-list {
    height: 106px;
}

.arrays-list svg {
    width: 8px;
    height: 8px;
    margin: 0 4px 0 5px;
}

.arrays input {
    appearance: none;
    flex: none;
    width: 8px;
    height: 8px;
    border: 1px solid #d2d2d2;
    background: #fff;
    border-radius: 0;
}

.arrays input:checked::before {
    content: "";
    display: block;
    width: 3px;
    height: 6px;
    margin: -1px 0 0 2px;
    border: solid #111;
    border-width: 0 1px 1px 0;
    transform: rotate(38deg);
}

.time {
    display: flex;
    height: 14px;
    margin-bottom: 3px;
}

.app-d .time {
    height: 13px;
}

.time span {
    width: 34px;
}

.time .combo {
    flex: 1;
}

.time select {
    color: #8c8c8c;
}

.time .combo::after {
    border-top-color: #999;
}

.view {
    margin-top: 7px;
    margin-bottom: 4px;
}

.app-d .view {
    margin-bottom: 3px;
}

.size-row {
    display: grid;
    grid-template-columns: 53px 1fr 70px;
    height: 13px;
    margin-bottom: var(--row-gap);
    white-space: nowrap;
}

.size-row input[type="text"] {
    width: 67px;
    margin-left: 3px;
    border: 1px solid #bcbcbc;
    padding-left: 1px;
    border-radius: 1px;
}

.size-row input[type="range"] {
    appearance: none;
    width: 100%;
    height: 3px;
    margin-top: 5px;
    background: linear-gradient(90deg, #1484e0 20%, #c6c6c6 20%);
}

.size-row input[type="range"]::-webkit-slider-thumb {
    appearance: none;
    width: 7px;
    height: 7px;
    background: #f6f6f6;
    border: 1px solid #b5b5b5;
    border-radius: 2px;
}

/* Render view */
.render {
    min-width: 0;
    display: flex;
    flex-direction: column;
}

.render > div:last-child {
    flex: 1;
    display: flex;
    flex-direction: column;
}

.layout-tabs {
    flex: none;
    height: 1px;
}

.app-d .layout-tabs {
    display: flex;
    height: 8px;
    overflow: hidden;
    border-bottom: 1px solid #dcdcdc;
}

.layout-tabs span {
    display: flex;
    align-items: center;
    height: 6px;
    font-family: Roboto, sans-serif;
}

.tab-on {
    width: 62px;
    gap: 2px;
    padding-left: 4px;
    border-right: 1px solid #ccc;
}

.tab-on i {
    width: 10px;
    height: 10px;
    border: 1px solid #444;
    margin-top: -4px;
}

.tab-on svg {
    width: 6px;
    height: 6px;
}

.tab-add {
    padding-left: 8px;
}

.view-bar {
    display: flex;
    align-items: center;
    flex: none;
    height: 18px;
    gap: 2px;
}

.render .view-bar {
    height: 19px;
}

.tools {
    display: flex;
    align-items: center;
    gap: 5px;
}

.tools svg {
    width: 11px;
    height: 11px;
}

.tools .wide {
    margin-left: 4px;
}

.tools span {
    width: 11px;
    font-weight: bold;
    color: #555;
}

.view-name {
    margin-left: auto;
    margin-right: 4px;
    font-family: Roboto, sans-serif;
}

.view-name.active {
    font-family: 'Open Sans', sans-serif;
    font-weight: bold;
    text-decoration: underline;
}

.view-bar button {
    width: 15px;
    height: 16px;
}

.render .view-bar button:last-child {
    margin-right: 2px;
}

.view-bar button svg {
    width: 10px;
    height: 10px;
}

.view-bar button .small {
    width: 7px;
    height: 7px;
}

.canvas {
    flex: 1;
    display: flex;
    align-items: flex-end;
    background: #fff;
    margin-right: 4px;
    margin-bottom: 2px;
    padding: 0 0 54px 56px;
}

.app-d .canvas {
    padding-left: 55px;
}

.axes {
    width: 40px;
    height: 42px;
}

/* Sheet view */
.sheet {
    min-width: 0;
    min-height: 0;
    display: flex;
    flex-direction: column;
}

.app-d .sheet {
    padding: 8px 1px 2px 0;
}

.sheet .view-bar {
    margin-right: -3px;
}

.app-d .sheet .view-bar {
    margin-right: 0;
}

.sheet-frame {
    flex: 1;
    min-height: 0;
    display: flex;
    flex-direction: column;
    border: 2px solid #2929f0;
    background: #fff;
}

.app-c .sheet-frame {
    border-right: 0;
}

.sheet-bar {
    display: flex;
    flex: none;
    height: 16px;
    background: #f0f0f0;
}

.app-d .sheet-bar {
    height: 14px;
}

.sheet-bar label {
    display: flex;
    align-items: center;
    gap: 2px;
}

.sheet-bar .combo {
    flex: 1;
    height: 100%;
}

.sheet-bar select {
    padding: 0 5px 0 1px;
    border-color: #d0d0d0;
}

.sheet-bar .combo::after {
    right: 3px;
}

.w-show { flex: 132; min-width: 0; }
.w-attr { flex: 85; min-width: 0; margin-left: 1px; }
.w-prec { flex: 55; min-width: 0; margin-left: 2px; }

.spin {
    position: relative;
    flex: 1;
    height: 100%;
    min-width: 0;
}

.spin input {
    width: 100%;
    height: 100%;
    border: 1px solid #ccc;
    padding-left: 4px;
}

.spin i {
    position: absolute;
    right: 2px;
    top: 4px;
    border: 2px solid transparent;
    border-top: 0;
    border-bottom: 3px solid #555;
}

.spin .down {
    top: 9px;
    border-bottom: 0;
    border-top: 3px solid #555;
}

.sheet-bar button {
    flex: none;
    width: 14px;
    margin-left: 1px;
    border-color: #d2d2d2;
}

.sheet-bar button.down {
    background: #dcdcdc;
}

.sheet-bar button svg {
    width: 11px;
    height: 11px;
}

.grid-wrap {
    flex: 1;
    min-height: 0;
    display: flex;
}

.grid-clip {
    flex: 1;
    min-width: 0;
    overflow: hidden;
    background: linear-gradient(#f0f0f0 11px, #fff 11px);
}

.grid-wrap .vbar b {
    height: 16px;
}

.grid {
    width: 341px;
    height: 472px;
    color: #333;
}

.app-d .grid {
    width: 190px;
    height: 456px;
}

.grid th, .grid td {
    padding: 0 0 0 2px;
    border-right: 1px solid #d0d0d0;
    border-bottom: 1px solid #d0d0d0;
    white-space: nowrap;
    text-align: left;
    line-height: 9px;
}

.app-d .grid td {
    padding-left: 1px;
}

.grid thead th {
    height: 12px;
    padding: 0;
    text-align: center;
    background: linear-gradient(#fbfbfb, #eee);
}

.grid tbody th {
    background: linear-gradient(#fdfdfd, #e8e8e8);
    border-color: #bcbcbc;
}

.grid tbody tr:nth-child(even) td {
    background: #e9e7e3;
}

.grid tbody td.focus {
    background: #e8f3fc;
    border-color: #a8cbe8;
}

.app-c .sheet-frame .hbar {
    border-width: 0;
    flex: none;
}

.app-c .sheet-frame .hbar i {
    height: 9px;
}

.app-c .sheet-frame .hbar b {
    width: 42%;
    border-width: 0 1px;
}
```
FILE: script.js
```
// Fill the shared pieces of each window
document.querySelectorAll('[data-tpl]').forEach(function(el) {
    const tpl = document.getElementById(el.dataset.tpl);
    el.appendChild(tpl.content.cloneNode(true));
    if (el.dataset.attribute) {
        el.querySelector('.attribute').innerHTML = '<option>' + el.dataset.attribute + '</option>';
    }
});

const arrays = ['area', 'failure mode', 'length', 'opening 0', 'opening 1', 'opening 2', 'property id', 'slip 0', 'slip 1', 'slip 2'];
document.querySelectorAll('.arrays-list').forEach(function(list) {
    list.innerHTML = arrays.map(function(name) {
        return '<label><input type="checkbox" checked><svg><use href="#i-cells"/></svg>' + name + '</label>';
    }).join('');
});

function buildTable(id, widths, head, rows) {
    const cols = widths.map(w => '<col style="width:' + w + 'px">').join('');
    const body = rows.map(function(row, i) {
        return '<tr><th>' + i + '</th>' + row.map(v => '<td>' + v + '</td>').join('') + '</tr>';
    }).join('');
    document.getElementById(id).innerHTML = '<colgroup>' + cols + '</colgroup><thead><tr>' + head + '</tr></thead><tbody>' + body + '</tbody>';
}

// Cell data
const areas = ['2.71255e-10', '6.04478e-09', '1.11252e-08', '1.63576e-10', '4.95163e-10', '1.44932e-09', '8.6212e-10', '1.45927e-09'];
const cellRows = [];
for (let i = 0; i < 25; i++) {
    const area = i < 16 ? areas[Math.floor(i / 2)] : (i === 24 ? '1.96349e-10' : '0');
    const mode = i >= 10 && i <= 17 ? 2 : 1;
    cellRows.push([i, 'Pixel', 4 * i, 4 * i + 1, 4 * i + 2, 4 * i + 3, area, mode]);
}
buildTable('cellTable', [20, 25, 32, 48, 48, 47, 48, 43, 30],
    '<th></th><th>Cell ID</th><th>Cell Type</th><th>Point Index 0</th><th>Point Index 1</th><th>Point Index 2</th><th>Point Index 3</th><th>area</th><th>failure m</th>',
    cellRows);
document.querySelector('#cellTable td').className = 'focus';

// Point data
const kinds = {
    a: ['10.2195', '10.1554', '14.4072'],
    b: ['10.2305', '10.1593', '14.4179'],
    c: ['9.84465', '10.2195', '14.1899'],
    d: ['9.84065', '10.2305', '14.1951'],
    e: ['10.1554', '9.78054', '14.0993'],
    f: ['10.1593', '9.76954', '14.0945'],
    g: ['9.78054', '9.84465', '13.8772']
};
const pointRows = 'ababbabacdcddcdcefeffefeg'.split('').map(function(k, i) {
    const p = kinds[k];
    return [i, p[0], p[1], 0, p[2]];
});
buildTable('pointTable', [24, 29, 28, 28, 20, 61],
    '<th></th><th>Point ID</th><th colspan="3">Points</th><th>Points_Magnitude</th>',
    pointRows);
```
